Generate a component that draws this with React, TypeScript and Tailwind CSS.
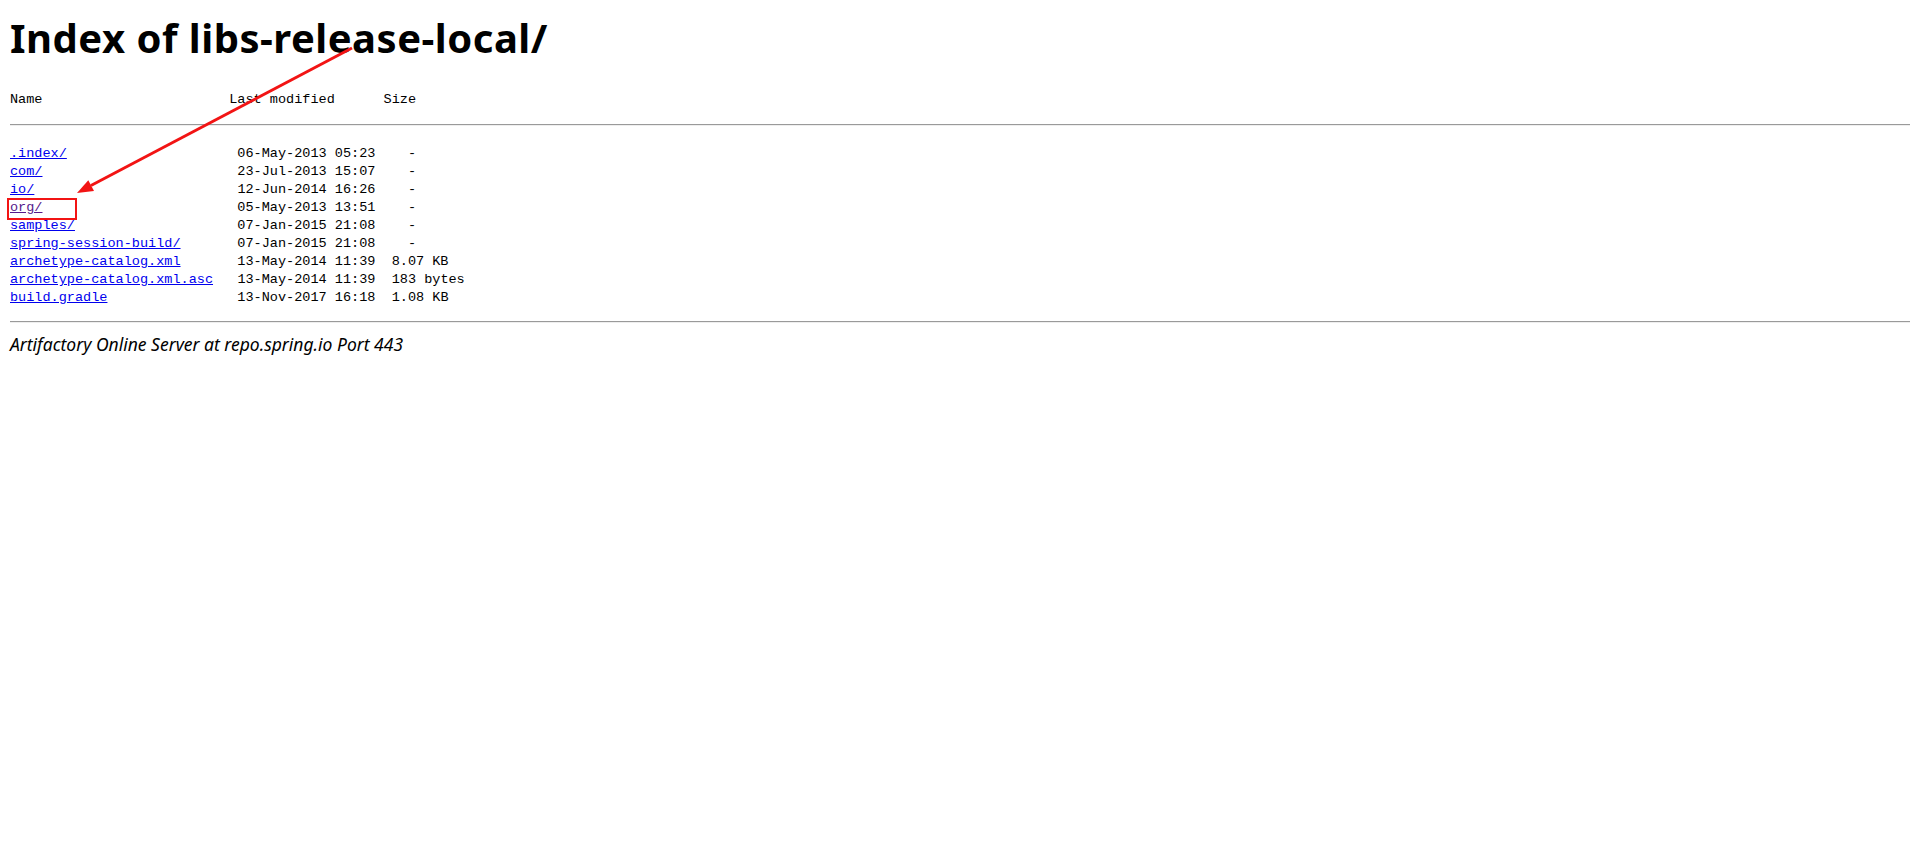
import React from 'react';

type Entry = { name: string; date: string; size: string; visited?: boolean };

const entries: Entry[] = [
  { name: '.index/', date: '06-May-2013 05:23', size: '-' },
  { name: 'com/', date: '23-Jul-2013 15:07', size: '-' },
  { name: 'io/', date: '12-Jun-2014 16:26', size: '-' },
  { name: 'org/', date: '05-May-2013 13:51', size: '-', visited: true },
  { name: 'samples/', date: '07-Jan-2015 21:08', size: '-' },
  { name: 'spring-session-build/', date: '07-Jan-2015 21:08', size: '-' },
  { name: 'archetype-catalog.xml', date: '13-May-2014 11:39', size: '8.07 KB' },
  { name: 'archetype-catalog.xml.asc', date: '13-May-2014 11:39', size: '183 bytes' },
  { name: 'build.gradle', date: '13-Nov-2017 16:18', size: '1.08 KB' },
];

const mono = "font-['Liberation_Mono','DejaVu_Sans_Mono',monospace] text-[13.54px] leading-[18px] text-black whitespace-pre";

export default function App() {
  return (
    <div className="relative min-h-screen w-full bg-white px-[10px] font-['Noto_Sans',sans-serif] text-black">
      <h1 className="text-[40px] font-bold leading-[53px] pt-[11px] tracking-[0.5px]">Index of libs-release-local/</h1>

      {/* header row */}
      <pre className={`${mono} mt-[27px]`}>{'Name' + ' '.repeat(23) + 'Last modified' + ' '.repeat(6) + 'Size'}</pre>
      <hr className="mt-[15px] border-t border-b border-t-[#9a9a9a] border-b-[#eeeeee]" />

      {/* listing */}
      <pre className={`${mono} mt-[19px]`}>
        {entries.map((e) => (
          <div key={e.name}>
            <a
              href="#"
              className={e.visited ? 'underline text-[#551a8b]' : 'underline text-[#0000ee]'}
            >
              {e.name}
            </a>
            {' '.repeat(28 - e.name.length) + e.date + (e.size === '-' ? '    -' : '  ' + e.size)}
          </div>
        ))}
      </pre>
      <hr className="mt-[14px] border-t border-b border-t-[#9a9a9a] border-b-[#eeeeee]" />

      <address className="mt-[10px] text-[17.5px] leading-[23px] italic">Artifactory Online Server at repo.spring.io Port 443</address>

      {/* annotation overlay */}
      <svg className="pointer-events-none absolute inset-0 h-full w-full" xmlns="http://www.w3.org/2000/svg">
        <line x1="352" y1="48" x2="91" y2="185.5" stroke="#f21414" strokeWidth="3" />
        <polygon points="77,193 88.3,180.2 94,190.9" fill="#f21414" />
        <rect x="8" y="199" width="68" height="20" fill="none" stroke="#f21414" strokeWidth="2" />
      </svg>
    </div>
  );
}
